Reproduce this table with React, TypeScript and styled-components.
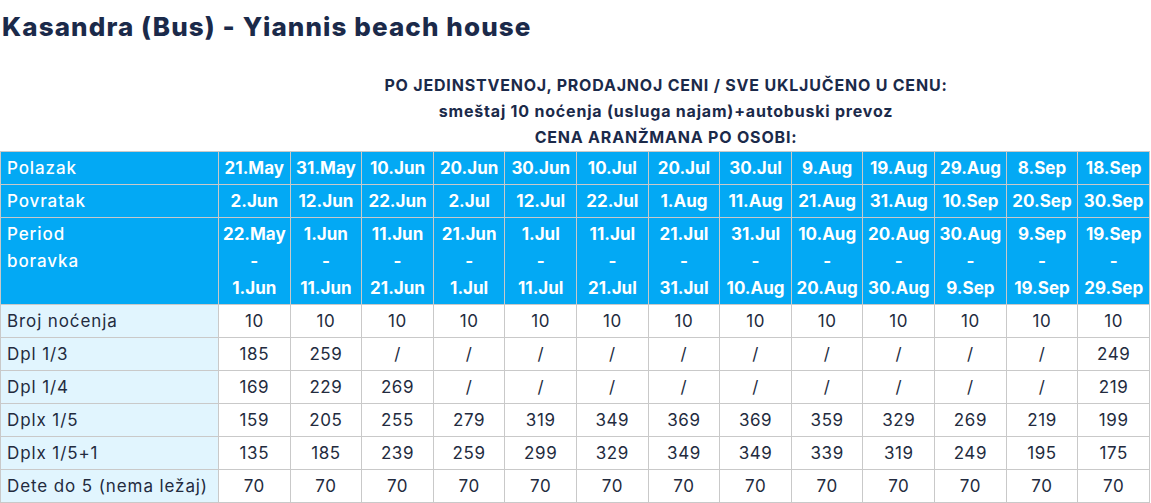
import React from "react";
import styled, { createGlobalStyle } from "styled-components";

const GlobalStyle = createGlobalStyle`
  body {
    margin: 0;
    background: #ffffff;
    font-family: Inter, "Noto Sans", sans-serif;
    color: #1d2b4b;
  }
`;

const Page = styled.div`
  width: 1151px;
`;

const Title = styled.h1`
  margin: 0;
  padding: 10px 0 0 2px;
  font-size: 26px;
  line-height: 34px;
  font-weight: 800;
  letter-spacing: 1.1px;
  color: #1b2a4a;
`;

const Intro = styled.div`
  padding: 28px 0 0 181px;
  text-align: center;
  font-size: 16px;
  line-height: 26px;
  font-weight: 700;
  letter-spacing: 0.8px;
  color: #1b2a4a;
`;

const Table = styled.table`
  width: 1150px;
  border-collapse: collapse;
  table-layout: fixed;
  margin-top: 1px;
`;

const Cell = styled.td<{ $head?: boolean }>`
  border: 1px solid #c9c9c9;
  padding: 3px 1px 2px;
  line-height: 27px;
  font-size: 17px;
  text-align: center;
  vertical-align: top;
  white-space: nowrap;
  overflow: hidden;
  letter-spacing: ${(p) => (p.$head ? "0" : "0.6px")};
  background: ${(p) => (p.$head ? "#03a9f4" : "#ffffff")};
  color: ${(p) => (p.$head ? "#ffffff" : "#232b3e")};
  font-weight: ${(p) => (p.$head ? 700 : 400)};
`;

const Label = styled(Cell)`
  text-align: left;
  padding-left: 6px;
  letter-spacing: 0.9px;
  font-weight: ${(p) => (p.$head ? 500 : 400)};
  background: ${(p) => (p.$head ? "#03a9f4" : "#e1f5fe")};
  white-space: normal;
`;

const departures = ["21.May", "31.May", "10.Jun", "20.Jun", "30.Jun", "10.Jul", "20.Jul", "30.Jul", "9.Aug", "19.Aug", "29.Aug", "8.Sep", "18.Sep"];
const returns = ["2.Jun", "12.Jun", "22.Jun", "2.Jul", "12.Jul", "22.Jul", "1.Aug", "11.Aug", "21.Aug", "31.Aug", "10.Sep", "20.Sep", "30.Sep"];
const stayFrom = ["22.May", "1.Jun", "11.Jun", "21.Jun", "1.Jul", "11.Jul", "21.Jul", "31.Jul", "10.Aug", "20.Aug", "30.Aug", "9.Sep", "19.Sep"];
const stayTo = ["1.Jun", "11.Jun", "21.Jun", "1.Jul", "11.Jul", "21.Jul", "31.Jul", "10.Aug", "20.Aug", "30.Aug", "9.Sep", "19.Sep", "29.Sep"];

const prices: { label: string; values: string[] }[] = [
  { label: "Broj noćenja", values: Array(13).fill("10") },
  { label: "Dpl 1/3", values: ["185", "259", "/", "/", "/", "/", "/", "/", "/", "/", "/", "/", "249"] },
  { label: "Dpl 1/4", values: ["169", "229", "269", "/", "/", "/", "/", "/", "/", "/", "/", "/", "219"] },
  { label: "Dplx 1/5", values: ["159", "205", "255", "279", "319", "349", "369", "369", "359", "329", "269", "219", "199"] },
  { label: "Dplx 1/5+1", values: ["135", "185", "239", "259", "299", "329", "349", "349", "339", "319", "249", "195", "175"] },
  { label: "Dete do 5 (nema ležaj)", values: Array(13).fill("70") },
];

const App = () => {
  return (
    <>
      <GlobalStyle />
      <Page>
        <Title>Kasandra (Bus) - Yiannis beach house</Title>
        <Intro>
          <div>PO JEDINSTVENOJ, PRODAJNOJ CENI / SVE UKLJUČENO U CENU:</div>
          <div>smeštaj 10 noćenja (usluga najam)+autobuski prevoz</div>
          <div>CENA ARANŽMANA PO OSOBI:</div>
        </Intro>
        <Table>
          <colgroup>
            <col style={{ width: 218 }} />
            {departures.map((d) => (
              <col key={d} />
            ))}
          </colgroup>
          <tbody>
            <tr>
              <Label $head>Polazak</Label>
              {departures.map((d) => (
                <Cell $head key={d}>{d}</Cell>
              ))}
            </tr>
            <tr>
              <Label $head>Povratak</Label>
              {returns.map((d) => (
                <Cell $head key={d}>{d}</Cell>
              ))}
            </tr>
            <tr>
              <Label $head>
                Period
                <br />
                boravka
              </Label>
              {stayFrom.map((d, i) => (
                <Cell $head key={d}>
                  {d}
                  <br />-<br />
                  {stayTo[i]}
                </Cell>
              ))}
            </tr>
            {prices.map((row) => (
              <tr key={row.label}>
                <Label>{row.label}</Label>
                {row.values.map((v, i) => (
                  <Cell key={i}>{v}</Cell>
                ))}
              </tr>
            ))}
          </tbody>
        </Table>
      </Page>
    </>
  );
};

export default App;
